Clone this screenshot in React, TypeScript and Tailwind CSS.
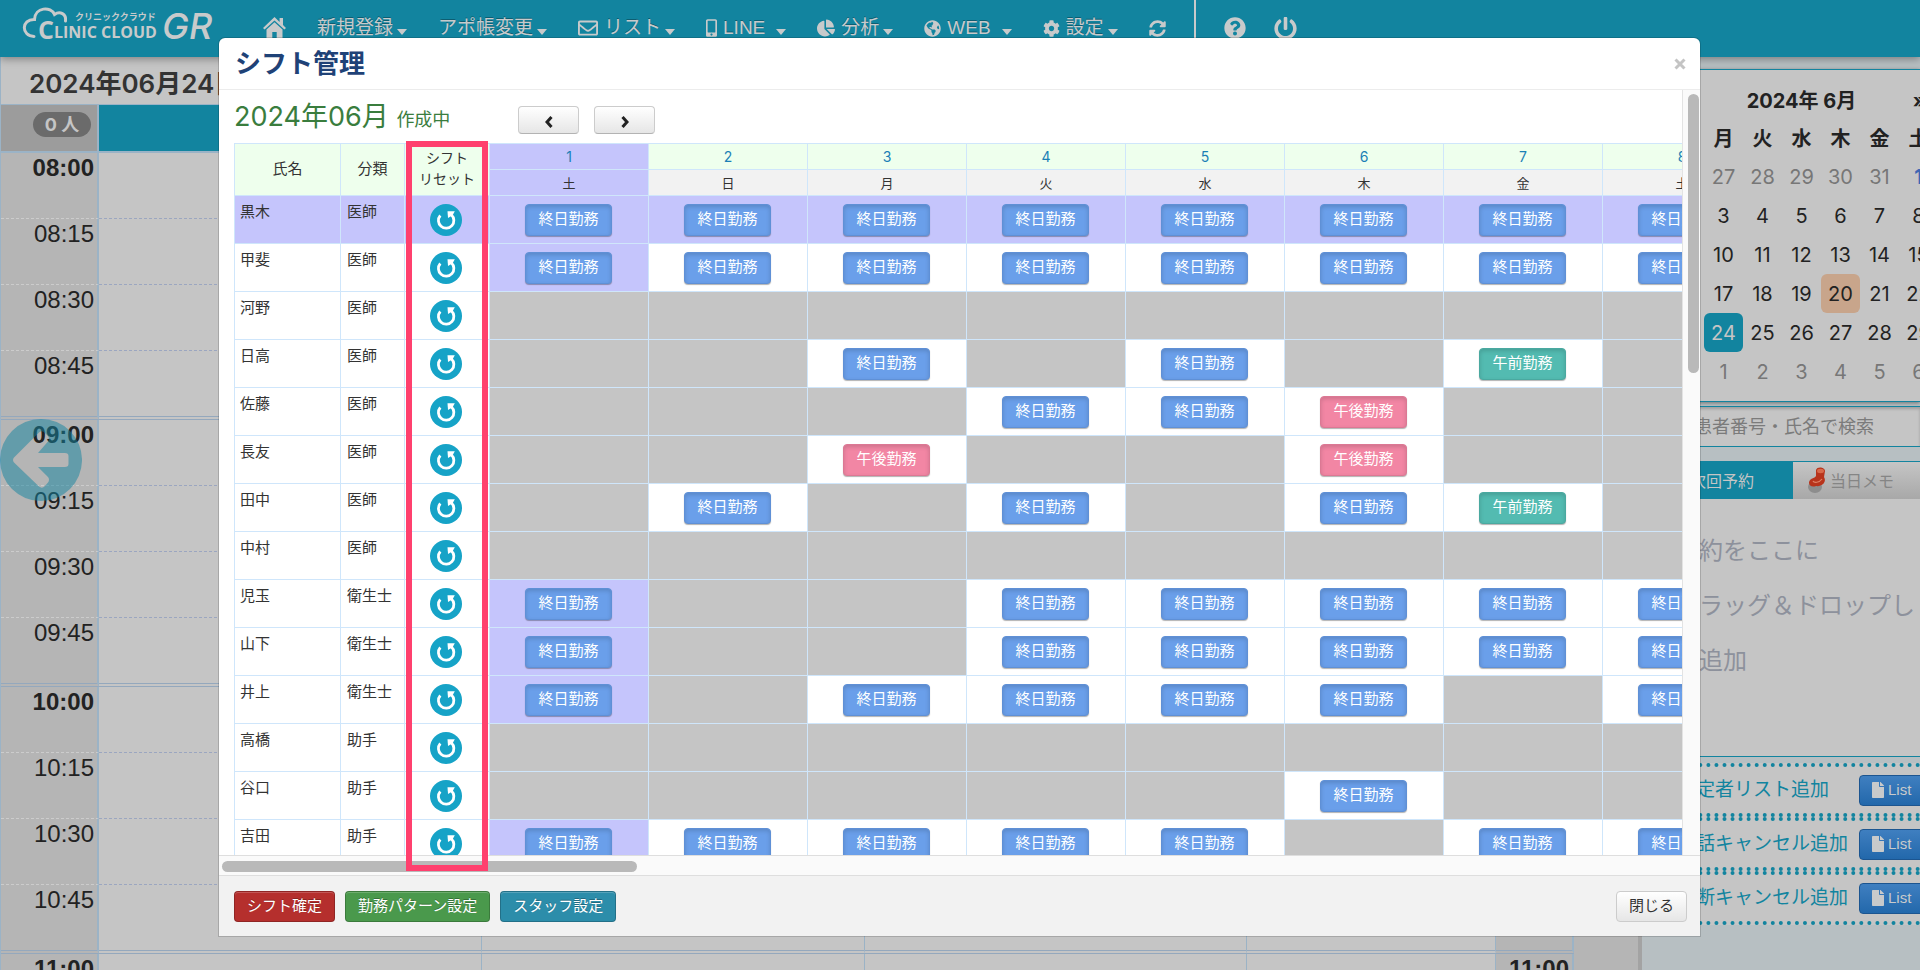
import React, { useState } from "react";
import {
  FaChartPie,
  FaCog,
  FaFile,
  FaGlobeAmericas,
  FaMobileAlt,
  FaPowerOff,
  FaQuestionCircle,
  FaRegEnvelope,
  FaSyncAlt,
} from "react-icons/fa";

type Staff = { name: string; kind: string; shifts: string };

// a: 終日, m: 午前, p: 午後, -: 休み
const staffs: Staff[] = [
  { name: "黒木", kind: "医師", shifts: "aaaaaaaa" },
  { name: "甲斐", kind: "医師", shifts: "aaaaaaaa" },
  { name: "河野", kind: "医師", shifts: "--------" },
  { name: "日高", kind: "医師", shifts: "--a-a-m-" },
  { name: "佐藤", kind: "医師", shifts: "---aap--" },
  { name: "長友", kind: "医師", shifts: "--p--p--" },
  { name: "田中", kind: "医師", shifts: "-a-a-am-" },
  { name: "中村", kind: "医師", shifts: "--------" },
  { name: "児玉", kind: "衛生士", shifts: "a--aaaaa" },
  { name: "山下", kind: "衛生士", shifts: "a--aaaaa" },
  { name: "井上", kind: "衛生士", shifts: "a-aaaa-a" },
  { name: "高橋", kind: "助手", shifts: "--------" },
  { name: "谷口", kind: "助手", shifts: "-----a--" },
  { name: "吉田", kind: "助手", shifts: "aaaaa-aa" },
];

const shiftTypes: Record<string, { label: string; color: string }> = {
  a: { label: "終日勤務", color: "bg-[#6a9fea] border-[#5f90d6]" },
  m: { label: "午前勤務", color: "bg-[#53bbb1] border-[#4aa9a0]" },
  p: { label: "午後勤務", color: "bg-[#f286a4] border-[#dc7894]" },
};

const weekdays = ["土", "日", "月", "火", "水", "木", "金", "土"];

const times = [
  "08:00", "08:15", "08:30", "08:45",
  "09:00", "09:15", "09:30", "09:45",
  "10:00", "10:15", "10:30", "10:45",
  "11:00",
];

const calendarHead = ["日", "月", "火", "水", "木", "金", "土"];
const calendarWeeks = [
  [26, 27, 28, 29, 30, 31, 1],
  [2, 3, 4, 5, 6, 7, 8],
  [9, 10, 11, 12, 13, 14, 15],
  [16, 17, 18, 19, 20, 21, 22],
  [23, 24, 25, 26, 27, 28, 29],
  [30, 1, 2, 3, 4, 5, 6],
];

function Caret() {
  return (
    <svg width="10" height="6" viewBox="0 0 10 6" className="mt-2 fill-current">
      <path d="M0 0h10L5 6z" />
    </svg>
  );
}

function Logo() {
  return (
    <svg width="200" height="48" viewBox="0 0 200 48" className="fill-[#c8cacb]" role="img">
      <path
        d="M12 36.500C-1 36 -1 19 12.500 19.500C13 7 29 6 32.500 14.500C38 10.500 44.500 14 43.500 21"
        fill="none"
        stroke="#c8cacb"
        strokeWidth="3"
        strokeLinecap="round"
      />
      <text x="53" y="20" className="font-['Noto_Sans_CJK_JP',sans-serif] text-[9px] font-bold">
        クリニッククラウド
      </text>
      <text x="16" y="39" className="font-['Open_Sans',sans-serif] text-[25px] font-bold">
        C
      </text>
      <text x="32" y="38" className="font-['Open_Sans',sans-serif] text-[16px] font-bold">
        LINIC CLOUD
      </text>
      <text x="140" y="39" className="font-['Inter',sans-serif] text-[36px] font-medium italic">
        GR
      </text>
    </svg>
  );
}

function HomeIcon() {
  return (
    <svg width="23" height="22" viewBox="0 0 23 22" className="fill-current">
      <path d="M11.500 0 0 11l1.600 1.600L11.500 3.400l9.900 9.200L23 11l-3-2.900V1h-3.400v3.900z" />
      <path d="M11.500 5.200 3.500 12.600V22h5.800v-7h4.400v7h5.800v-9.400z" />
    </svg>
  );
}

type NavItemProps = { icon?: React.ReactNode; label: string; wide?: boolean };

function NavItem({ icon, label, wide }: NavItemProps) {
  return (
    <a href="#" className={`flex items-center ${wide ? "gap-[11px]" : "gap-1"}`}>
      <span className="flex items-center gap-1.5">
        {icon}
        {label}
      </span>
      <Caret />
    </a>
  );
}

function Header() {
  return (
    <header className="relative z-10 flex h-[57px] shrink-0 items-start bg-[#12849f] pl-[22px] text-[#c8cacb] shadow-[0_2px_8px_rgba(0,0,0,0.35)]">
      <Logo />
      <nav className="ml-[41px] flex h-14 items-center gap-[31px] whitespace-nowrap font-['Liberation_Sans','Noto_Sans_CJK_JP',sans-serif] text-[19px] [text-shadow:0_-1px_0_rgba(0,0,0,0.3)]">
        <a href="#" aria-label="ホーム">
          <HomeIcon />
        </a>
        <NavItem label="新規登録" />
        <NavItem label="アポ帳変更" />
        <NavItem icon={<FaRegEnvelope size={20} />} label="リスト" />
        <NavItem icon={<FaMobileAlt className="h-[18px] w-[11px]" />} label="LINE" wide />
        <NavItem icon={<FaChartPie size={18} />} label="分析" />
        <NavItem icon={<FaGlobeAmericas size={17} />} label="WEB" wide />
        <NavItem icon={<FaCog size={17} />} label="設定" />
        <div className="flex h-full items-center gap-7">
          <a href="#" aria-label="更新">
            <FaSyncAlt size={17} />
          </a>
          <span className="h-full w-0.5 bg-[#c8cacb]" />
          <a href="#" aria-label="ヘルプ">
            <FaQuestionCircle size={22} />
          </a>
          <a href="#" aria-label="ログアウト">
            <FaPowerOff size={23} />
          </a>
        </div>
      </nav>
    </header>
  );
}

function TimeCell({ time, line }: { time: string; line: string }) {
  const bold = time.endsWith(":00") ? "font-bold" : "";
  return (
    <td
      className={`border-r-2 bg-[#b5b5b5] pr-[3px] text-right align-top font-['Liberation_Sans',sans-serif] text-[24px] leading-[30px] text-[#222] border-r-[#9bb3c6] ${bold} ${line}`}
    >
      {time}
    </td>
  );
}

function Schedule() {
  return (
    <main className="min-w-0 flex-1 border-l border-[#9bb3c6] bg-[#b5b5b5]">
      <h1 className="flex h-[47px] items-center bg-[#c5c5c5] pt-1.5 pl-7 text-[26px] font-semibold text-[#333]">
        2024年06月24日
      </h1>
      <table className="w-[1573px] table-fixed border-separate border-spacing-0 bg-[#c5c5c5]">
        <colgroup>
          <col className="w-[98px]" />
          <col className="w-[383px]" />
          <col className="w-[383px]" />
          <col className="w-[382px]" />
          <col />
          <col className="w-[78px]" />
        </colgroup>
        <thead>
          <tr className="h-[49px]">
            <th className="border-t border-r-2 border-b-2 border-[#9bb3c6] bg-[#9c9c9c] pb-2">
              <span className="ml-8 block w-[58px] rounded-full bg-[#6b6b6b] text-center text-[18px] leading-[25px] font-bold text-[#c5c5c5]">
                0 人
              </span>
            </th>
            <th colSpan={4} className="border-t border-r border-b-2 border-[#9bb3c6] bg-[#12849f]" />
            <th className="border-t border-b-2 border-[#9bb3c6] bg-[#9c9c9c]" />
          </tr>
        </thead>
        <tbody>
          {times.map((time) => {
            const last = time.endsWith(":45");
            const line = last
              ? "border-b-4 [border-bottom-style:double] border-b-[#94a8bd]"
              : "border-b [border-bottom-style:dashed] border-b-[#9ba6c0]";
            const timeLine = last
              ? "border-b-4 [border-bottom-style:double] border-b-[#94a8bd]"
              : "border-b [border-bottom-style:dashed] border-b-[#cccccc]";
            return (
              <tr key={time} className={last ? "h-[69px]" : "h-[66px]"}>
                <TimeCell time={time} line={timeLine} />
                {[1, 2, 3, 4].map((n) => (
                  <td key={n} className={`border-r border-r-[#9bb3c6] ${line}`} />
                ))}
                <TimeCell time={time} line={timeLine} />
              </tr>
            );
          })}
        </tbody>
      </table>
    </main>
  );
}

function Calendar() {
  return (
    <section className="border-y border-[#12849f] bg-[#c5c5c5] pb-[10px] pl-[23px] shadow-[0_1px_4px_rgba(0,0,0,0.4)]">
      <div className="flex h-[50px] w-[273px] items-center justify-between px-3 pt-3 text-[20px] font-bold text-[#222]">
        <button type="button" aria-label="前の月">
          «
        </button>
        <span>2024年 6月</span>
        <button type="button" aria-label="次の月">
          »
        </button>
      </div>
      <table className="w-[273px] table-fixed text-center text-[20px] text-[#222]">
        <thead>
          <tr className="h-[37px]">
            {calendarHead.map((d) => (
              <th key={d}>{d}</th>
            ))}
          </tr>
        </thead>
        <tbody>
          {calendarWeeks.map((week, w) => (
            <tr key={w} className="h-[39px]">
              {week.map((day, i) => {
                const outside = (w === 0 && day > 20) || (w === 5 && day < 10);
                let cls = "";
                if (outside) cls = "text-[#777]";
                if (w === 0 && day === 1) cls = "font-bold text-[#3f66b3]";
                if (w === 3 && day === 20) cls = "bg-[#c8a58b]";
                if (w === 4 && day === 24) cls = "bg-[#12849f] text-[#c5c5c5]";
                return (
                  <td key={i} className={`rounded-md ${cls}`}>
                    {day}
                  </td>
                );
              })}
            </tr>
          ))}
        </tbody>
      </table>
    </section>
  );
}

function PinIcon() {
  return (
    <svg width="18" height="28" viewBox="0 0 18 28">
      <ellipse cx="7" cy="20" rx="7" ry="6" fill="#8d8d8d" />
      <path d="M8 3C9-1 17 0 17 4L16 10C19 15 14 20 8 19 3 21-1 17 2 13 4 11 7 11 8 9z" fill="#b8341c" />
      <ellipse cx="12.500" cy="4" rx="3.500" ry="2.200" fill="#d9694a" />
      <path d="M5 14c1 2 6 2 9-2" fill="none" stroke="#df8468" strokeWidth="1.200" />
    </svg>
  );
}

function SidePanel() {
  return (
    <aside className="w-[282px] shrink-0 overflow-hidden border-l-4 border-[#a3a3a3] bg-[#b7bfc2] pt-3 whitespace-nowrap">
      <Calendar />
      <input
        type="text"
        aria-label="患者検索"
        placeholder="患者番号・氏名で検索"
        className="mt-1 block h-[41px] w-full border-y border-[#12849f] bg-[#c5c5c5] pl-[52px] text-[18px] shadow-[inset_0_2px_3px_rgba(0,0,0,0.2)] placeholder:text-[#7b7b7b]"
      />
      <div className="mt-[14px] border-y border-[#12849f] bg-[#c5c5c5]">
        <div className="flex h-[37px] text-[16px]">
          <button type="button" className="w-[151px] bg-[#12849f] pl-12 text-left text-[#c5c5c5]">
            次回予約
          </button>
          <button
            type="button"
            className="flex flex-1 items-center gap-1 bg-linear-to-b from-[#c5c5c5] to-[#a8a8a8] pl-[15px] text-[#858585]"
          >
            <PinIcon />
            当日メモ
          </button>
        </div>
        <p className="h-[257px] pt-6 pl-[33px] text-[24px] leading-[55px] text-[#8d919c]">
          予約をここに
          <br />
          ドラッグ＆ドロップし
          <br />
          て追加
        </p>
      </div>
      <ul className="mt-1.5 text-[19px] text-[#12849f]">
        {["予定者リスト追加", "電話キャンセル追加", "中断キャンセル追加"].map((t) => (
          <li
            key={t}
            className="flex h-[54px] items-center border-y-4 border-dotted border-[#12849f] bg-[#c5c5c5] pl-[35px]"
          >
            <span className="w-[182px] shrink-0">{t}</span>
            <button
              type="button"
              className="flex h-[31px] w-[66px] shrink-0 items-center gap-1 rounded-sm border border-[#1c5590] bg-linear-to-b from-[#3f7fc0] to-[#2268ab] pl-3 font-['Liberation_Sans',sans-serif] text-[15px] text-[#c8cacb]"
            >
              <FaFile className="h-4 w-[12px]" />
              List
            </button>
          </li>
        ))}
      </ul>
    </aside>
  );
}

function ResetButton({ name }: { name: string }) {
  return (
    <button type="button" aria-label={`${name} シフトリセット`} className="block size-8 rounded-full bg-[#16a3c7]">
      <svg viewBox="0 0 32 32" className="size-8">
        <path
          d="M10.300 11.500A7.700 7.700 0 1 0 21.300 10.800"
          fill="none"
          stroke="#fff"
          strokeWidth="2.800"
        />
        <path d="M17.500 7.200H24.800L22.600 11.200 18 14z" fill="#fff" />
      </svg>
    </button>
  );
}

function ShiftTable() {
  const cell = "border-r border-b border-[#cfe6fb]";
  return (
    <table className="w-[1528px] table-fixed border-separate border-spacing-0 border-t border-l border-[#cfe6fb] text-[15px] text-[#333]">
      <colgroup>
        <col className="w-[106px]" />
        <col className="w-16" />
        <col className="w-[85px]" />
        {weekdays.map((_, i) => (
          <col key={i} className="w-[159px]" />
        ))}
      </colgroup>
      <thead className="bg-[#eeffed]">
        <tr className="h-[26px]">
          <th rowSpan={2} className={`font-normal ${cell}`}>
            氏名
          </th>
          <th rowSpan={2} className={`font-normal ${cell}`}>
            分類
          </th>
          <th rowSpan={2} className={`pb-1 text-[14px] leading-[21px] font-normal ${cell}`}>
            シフト
            <br />
            リセット
          </th>
          {weekdays.map((_, i) => (
            <th key={i} className={`text-[14px] leading-5 font-normal ${cell} ${i === 0 ? "bg-[#c5c5fc]" : ""}`}>
              <a href="#" className="text-[#1a80b6]">
                {i + 1}
              </a>
            </th>
          ))}
        </tr>
        <tr className="h-[26px]">
          {weekdays.map((w, i) => (
            <th
              key={i}
              className={`text-[13px] leading-5 font-normal ${cell} ${i === 0 ? "bg-[#c5c5fc]" : "bg-[#f2f2f2]"}`}
            >
              {w}
            </th>
          ))}
        </tr>
      </thead>
      <tbody>
        {staffs.map((staff, row) => (
          <tr key={staff.name} className={`h-12 ${row === 0 ? "bg-[#c5c5fc]" : "bg-white"}`}>
            <td className={`pt-1.5 pl-[5px] align-top leading-5 ${cell}`}>{staff.name}</td>
            <td className={`pt-1.5 pl-[6px] align-top leading-5 ${cell}`}>{staff.kind}</td>
            <td className={`pl-[25px] ${cell}`}>
              <ResetButton name={staff.name} />
            </td>
            {staff.shifts.split("").map((s, i) => {
              const type = shiftTypes[s];
              if (!type) return <td key={i} className={`bg-[#c5c5c5] ${cell}`} />;
              return (
                <td key={i} className={`pr-px ${cell} ${i === 0 ? "bg-[#c5c5fc]" : ""}`}>
                  <button
                    type="button"
                    className={`mx-auto block h-8 w-[87px] rounded-sm border text-white shadow-[inset_0_2px_4px_rgba(0,0,0,0.15),0_1px_1px_rgba(0,0,0,0.3)] ${type.color}`}
                  >
                    {type.label}
                  </button>
                </td>
              );
            })}
          </tr>
        ))}
      </tbody>
    </table>
  );
}

function ArrowButton({ dir, onClick }: { dir: "prev" | "next"; onClick: () => void }) {
  return (
    <button
      type="button"
      aria-label={dir === "prev" ? "前月" : "翌月"}
      onClick={onClick}
      className="flex h-7 w-[61px] items-center justify-center rounded-sm border border-[#ccc] border-b-[#b3b3b3] bg-linear-to-b from-white to-[#e6e6e6]"
    >
      <svg width="8" height="12" viewBox="0 0 8 12" className="mt-1">
        <path
          d={dir === "prev" ? "M6.500 1 2 6l4.500 5" : "M1.500 1 6 6l-4.500 5"}
          fill="none"
          stroke="#222"
          strokeWidth="3"
        />
      </svg>
    </button>
  );
}

function ShiftModal({ onClose }: { onClose: () => void }) {
  const [month, setMonth] = useState(6);
  const action =
    "h-[31px] rounded-sm border border-black/20 px-3 text-[15px] text-white [text-shadow:0_-1px_0_rgba(0,0,0,0.25)] shadow-[inset_0_1px_0_rgba(255,255,255,0.2)]";

  return (
    <div
      role="dialog"
      aria-label="シフト管理"
      className="absolute top-[38px] right-[220px] left-[219px] z-20 rounded-t-md bg-white shadow-[0_0_0_1px_rgba(0,0,0,0.15)]"
    >
      <div className="flex h-[52px] items-center justify-between border-b border-[#ececec] pr-[14px] pl-4">
        <h2 className="text-[26px] font-bold text-[#1f4277]">シフト管理</h2>
        <button type="button" aria-label="閉じる" onClick={onClose}>
          <svg width="12" height="12" viewBox="0 0 12 12">
            <path d="M1.500 1.500l9 9m0-9l-9 9" stroke="#c4c4c4" strokeWidth="3" />
          </svg>
        </button>
      </div>

      <div className="flex h-[765px]">
        <div className="min-w-0 flex-1 overflow-hidden pl-[15px]">
          <div className="flex h-[53px] items-center">
            <h3 className="w-[284px] pt-0.5 text-[27px] text-[#3a7d3e]">
              2024年{String(month).padStart(2, "0")}月 <small className="text-[18px]">作成中</small>
            </h3>
            <div className="flex gap-[15px] pt-[7px]">
              <ArrowButton dir="prev" onClick={() => setMonth(Math.max(1, month - 1))} />
              <ArrowButton dir="next" onClick={() => setMonth(Math.min(12, month + 1))} />
            </div>
          </div>
          <ShiftTable />
        </div>
        <div className="w-[18px] border-l border-[#e3e3e3] bg-[#fafafa] pt-1 pl-[5px]">
          <div className="h-[279px] w-[11px] rounded-full bg-[#b9b9b9]" />
        </div>
      </div>
      <div className="h-[21px] border-y border-[#dedede] bg-[#fafafa] pt-[5px] pl-[3px]">
        <div className="h-[11px] w-[415px] rounded-full bg-[#b9b9b9]" />
      </div>

      {/* リセット列の強調枠 */}
      <div className="pointer-events-none absolute top-[103px] bottom-[65px] left-[187px] w-[82px] border-[6px] border-[#ff406e]" />

      <footer className="flex h-[60px] items-center gap-[10px] bg-[#f2f2f2] pr-[13px] pl-[15px]">
        <button type="button" className={`bg-[#b52f2d] ${action}`}>
          シフト確定
        </button>
        <button type="button" className={`bg-[#4a994c] ${action}`}>
          勤務パターン設定
        </button>
        <button type="button" className={`bg-[#2c8daa] ${action}`}>
          スタッフ設定
        </button>
        <button
          type="button"
          onClick={onClose}
          className="ml-auto h-[31px] rounded-sm border border-[#ccc] bg-linear-to-b from-white to-[#e6e6e6] px-3 text-[15px] text-[#333]"
        >
          閉じる
        </button>
      </footer>
    </div>
  );
}

function App() {
  const [open, setOpen] = useState(true);

  return (
    <div className="relative flex h-screen flex-col overflow-hidden bg-[#c5c5c5] font-['Inter','Noto_Sans_CJK_JP',sans-serif]">
      <Header />
      <div className="flex min-h-0 flex-1">
        <Schedule />
        <SidePanel />
      </div>
      <button type="button" aria-label="前へ" className="absolute top-[419px] left-0 size-[82px]">
        <svg viewBox="0 0 82 82" className="size-full">
          <path
            fillRule="evenodd"
            fill="#12849f"
            fillOpacity="0.5"
            d="M41 0a41 41 0 1 1 0 82a41 41 0 1 1 0-82zM14 38.500L39 13.500Q42 11 45 14L48 17Q50 19.500 48 22.500L38 34H65Q68.500 34 68.500 37V45Q68.500 48 65 48H38L48 58Q50 60.500 48 63.500L45 67Q42 70 39 67.500L14 43.500Q12 41 14 38.500z"
          />
        </svg>
      </button>
      {open && <ShiftModal onClose={() => setOpen(false)} />}
    </div>
  );
}

export default App;
